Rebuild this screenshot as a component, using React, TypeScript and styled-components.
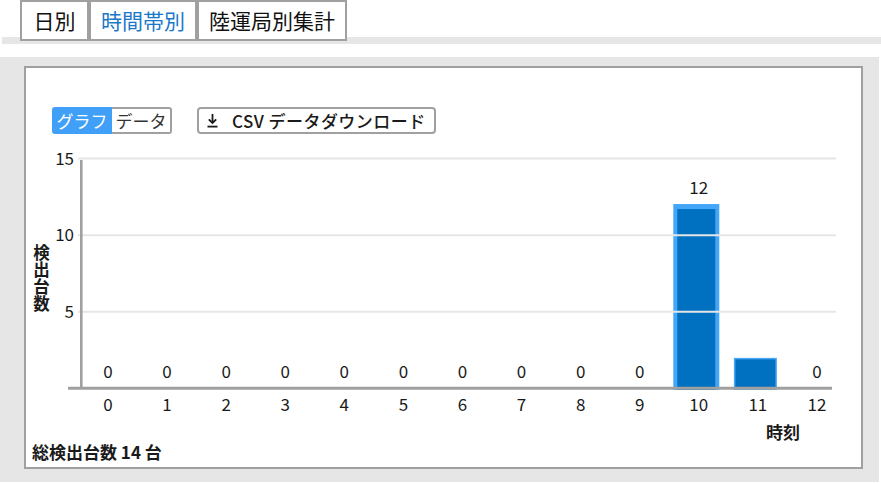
import React from 'react';
import styled, { createGlobalStyle } from 'styled-components';

const GlobalStyle = createGlobalStyle`
  html, body { margin: 0; padding: 0; background: #fff; }
  body {
    font-family: "Noto Sans CJK JP", "Noto Sans", sans-serif;
    color: #1a1a1a;
  }
  * { box-sizing: border-box; }
`;

const Page = styled.div`
  width: 881px;
  height: 483px;
  overflow: hidden;
`;

const TabRow = styled.div`
  display: flex;
  align-items: flex-start;
  height: 37px;
  padding-left: 20px;
`;

const Tab = styled.div<{ $active?: boolean }>`
  position: relative;
  z-index: 1;
  height: 41px;
  min-width: 69px;
  padding: 0 10px;
  border: 2px solid #a0a0a0;
  background: #fff;
  font-size: 21px;
  line-height: 37px;
  text-align: center;
  color: ${(p) => (p.$active ? '#1a78c8' : '#111')};
  white-space: nowrap;
`;

const Strip = styled.div`
  height: 7px;
  margin-left: 2px;
  background: #e6e6e6;
`;

const Container = styled.div`
  margin-top: 13px;
  width: 879px;
  height: 425px;
  padding: 9px 16px 13px 24px;
  background: #e6e6e6;
`;

const Panel = styled.div`
  height: 403px;
  border: 2px solid #a0a0a0;
  background: #fff;
  display: flex;
  flex-direction: column;
`;

const Toolbar = styled.div`
  display: flex;
  align-items: center;
  gap: 25px;
  margin-top: 39px;
  padding-left: 26px;
  height: 27px;
`;

const Toggle = styled.div`
  display: flex;
  height: 27px;
`;

const Segment = styled.div<{ $active?: boolean }>`
  width: 60px;
  height: 27px;
  font-size: 17px;
  line-height: 23px;
  text-align: center;
  border: 2px solid ${(p) => (p.$active ? '#40a0f7' : '#a0a0a0')};
  border-left: ${(p) => (p.$active ? '2px solid #40a0f7' : 'none')};
  border-radius: ${(p) => (p.$active ? '3px 0 0 3px' : '0 3px 3px 0')};
  background: ${(p) => (p.$active ? '#40a0f7' : '#fff')};
  color: ${(p) => (p.$active ? '#fff' : '#333')};
  white-space: nowrap;
`;

const CsvButton = styled.div`
  display: flex;
  align-items: center;
  gap: 14px;
  height: 27px;
  padding: 0 8px;
  border: 2px solid #a0a0a0;
  border-radius: 4px;
  font-size: 17px;
  font-weight: 500;
  line-height: 23px;
  letter-spacing: 0.45px;
  color: #1a1a1a;
  white-space: nowrap;
`;

const ChartSvg = styled.svg`
  display: block;
  margin-top: 6px;
  overflow: visible;
  font-family: "Noto Sans CJK JP", "Noto Sans", sans-serif;
`;

const Footer = styled.div`
  padding-left: 6px;
  font-size: 17px;
  font-weight: 700;
  line-height: 23px;
  white-space: nowrap;
`;

const DownloadIcon = () => (
  <svg width="11" height="15" viewBox="0 0 11 15" fill="none" stroke="#1a1a1a" strokeWidth="1.8">
    <line x1="5.5" y1="1" x2="5.5" y2="10" />
    <polyline points="1.8,6.3 5.5,10 9.2,6.3" />
    <line x1="0.5" y1="13.6" x2="10.5" y2="13.6" />
  </svg>
);

const data = [0, 0, 0, 0, 0, 0, 0, 0, 0, 0, 12, 2, 0];
const hiddenLabels = new Set([11]);
const BASE = 248.5;
const SCALE = 15.33;
const cx = (i: number) => 82 + 59.08 * i;
const yv = (v: number) => BASE - v * SCALE;

const Chart = () => (
  <ChartSvg width="835" height="300" viewBox="0 0 835 300">
    {data.map((v, i) => {
      if (v === 0) return null;
      const c = cx(i) - 2.5;
      const top = yv(v);
      if (i === 10) {
        return (
          <g key={i}>
            <rect x={c - 23} y={top - 0.5} width={46} height={BASE - top + 2} fill="#44a6f8" />
            <rect x={c - 19} y={top + 4.5} width={38} height={BASE - top - 3} fill="#0070c0" />
          </g>
        );
      }
      return (
        <rect
          key={i}
          x={c - 20.75}
          y={top + 0.75}
          width={41.5}
          height={BASE - top}
          fill="#0070c0"
          stroke="#4aa8f5"
          strokeWidth={1.5}
        />
      );
    })}
    {[5, 10, 15].map((v) => (
      <line key={v} x1={52} x2={810} y1={yv(v)} y2={yv(v)} stroke="#e6e6e6" strokeWidth={2} />
    ))}
    <line x1={55.3} x2={55.3} y1={20} y2={249} stroke="#a0a0a0" strokeWidth={2.6} />
    <line x1={42} x2={806} y1={248.3} y2={248.3} stroke="#a0a0a0" strokeWidth={3} />
    {[5, 10, 15].map((v) => (
      <text key={v} x={48} y={yv(v) + 6} textAnchor="end" fontSize={17} fill="#1a1a1a">
        {v}
      </text>
    ))}
    <text
      x={15.5}
      y={104}
      writingMode="vertical-rl"
      fontSize={16.5}
      letterSpacing={0.5}
      fontWeight={700}
      fill="#1a1a1a"
    >
      検出台数
    </text>
    {data.map((v, i) =>
      hiddenLabels.has(i) ? null : (
        <text key={i} x={cx(i)} y={yv(v) - 10.5} textAnchor="middle" fontSize={17} fill="#1a1a1a">
          {v}
        </text>
      )
    )}
    {data.map((_, i) => (
      <text key={i} x={cx(i)} y={271} textAnchor="middle" fontSize={17} fill="#1a1a1a">
        {i}
      </text>
    ))}
    <text x={740} y={299} fontSize={17} fontWeight={700} fill="#1a1a1a">
      時刻
    </text>
  </ChartSvg>
);

export default function App() {
  return (
    <Page>
      <GlobalStyle />
      <TabRow>
        <Tab>日別</Tab>
        <Tab $active>時間帯別</Tab>
        <Tab>陸運局別集計</Tab>
      </TabRow>
      <Strip />
      <Container>
        <Panel>
          <Toolbar>
            <Toggle>
              <Segment $active>グラフ</Segment>
              <Segment>データ</Segment>
            </Toggle>
            <CsvButton>
              <DownloadIcon />
              <span>CSV データダウンロード</span>
            </CsvButton>
          </Toolbar>
          <Chart />
          <Footer>総検出台数 14 台</Footer>
        </Panel>
      </Container>
    </Page>
  );
}
